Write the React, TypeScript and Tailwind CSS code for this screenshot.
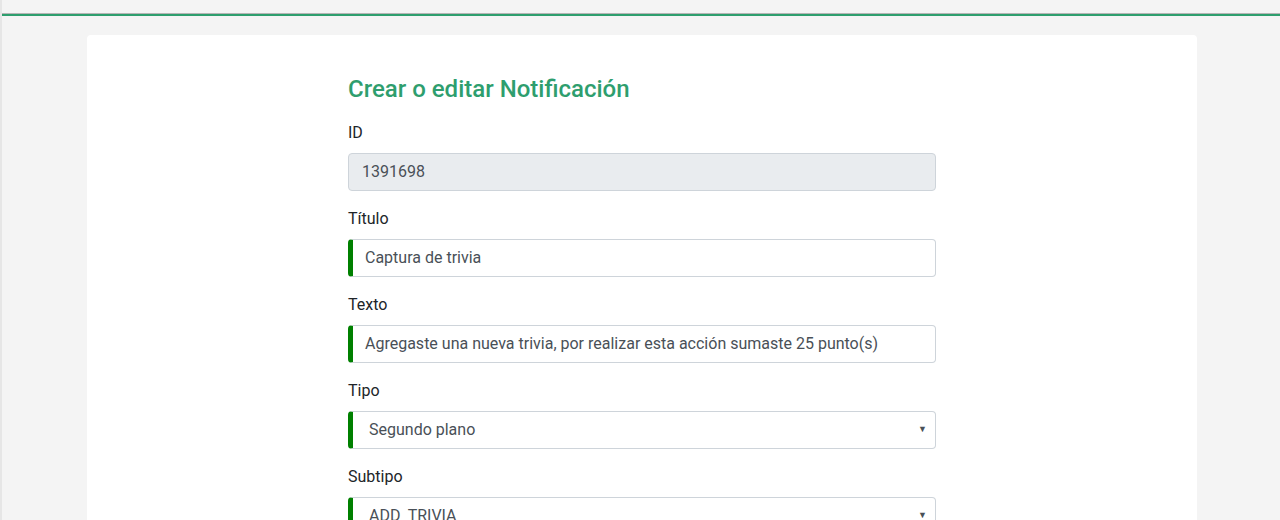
import React from 'react';

const fieldBase =
  'w-full h-[38px] border border-[#ced4da] rounded-[4px] text-[16px] text-[#495057] flex items-center';

function Label({ children }: { children: React.ReactNode }) {
  return <label className="block text-[16px] leading-6 text-[#212529] mb-2">{children}</label>;
}

function Select({ value }: { value: string }) {
  return (
    <div className={`${fieldBase} bg-white border-l-[5px] border-l-[#008000] pl-[16px] pr-[8px] justify-between`}>
      <span>{value}</span>
      <span className="text-[9px] text-[#495057]">▼</span>
    </div>
  );
}

export default function App() {
  return (
    <div
      className="h-[520px] overflow-hidden bg-[#f4f4f4] border-l-2 border-[#e6e6e6]"
      style={{ fontFamily: 'Roboto, "Liberation Sans", sans-serif' }}
    >
      <div className="h-[16px] border-b-2 border-[#2e9e6e] shadow-[0_-1px_0_#b5b5b5_inset]" />
      <div className="h-[19px]" />
      <div className="w-[1110px] ml-[85px] bg-white rounded-t-[4px] min-h-[485px] pt-[39px] pb-8">
        <div className="w-[588px] ml-[261px]">
          <h2 className="text-[24px] font-medium leading-[30px] text-[#2e9e6e] mb-[17px]">
            Crear o editar Notificación
          </h2>

          <div className="mb-4">
            <Label>ID</Label>
            <div className={`${fieldBase} bg-[#e9ecef] pl-[13px]`}>1391698</div>
          </div>

          <div className="mb-4">
            <Label>Título</Label>
            <div className={`${fieldBase} bg-white border-l-[5px] border-l-[#008000] pl-[12px]`}>Captura de trivia</div>
          </div>

          <div className="mb-4">
            <Label>Texto</Label>
            <div className={`${fieldBase} bg-white border-l-[5px] border-l-[#008000] pl-[12px]`}>
              Agregaste una nueva trivia, por realizar esta acción sumaste 25 punto(s)
            </div>
          </div>

          <div className="mb-4">
            <Label>Tipo</Label>
            <Select value="Segundo plano" />
          </div>

          <div className="mb-4">
            <Label>Subtipo</Label>
            <Select value="ADD_TRIVIA" />
          </div>
        </div>
      </div>
    </div>
  );
}
